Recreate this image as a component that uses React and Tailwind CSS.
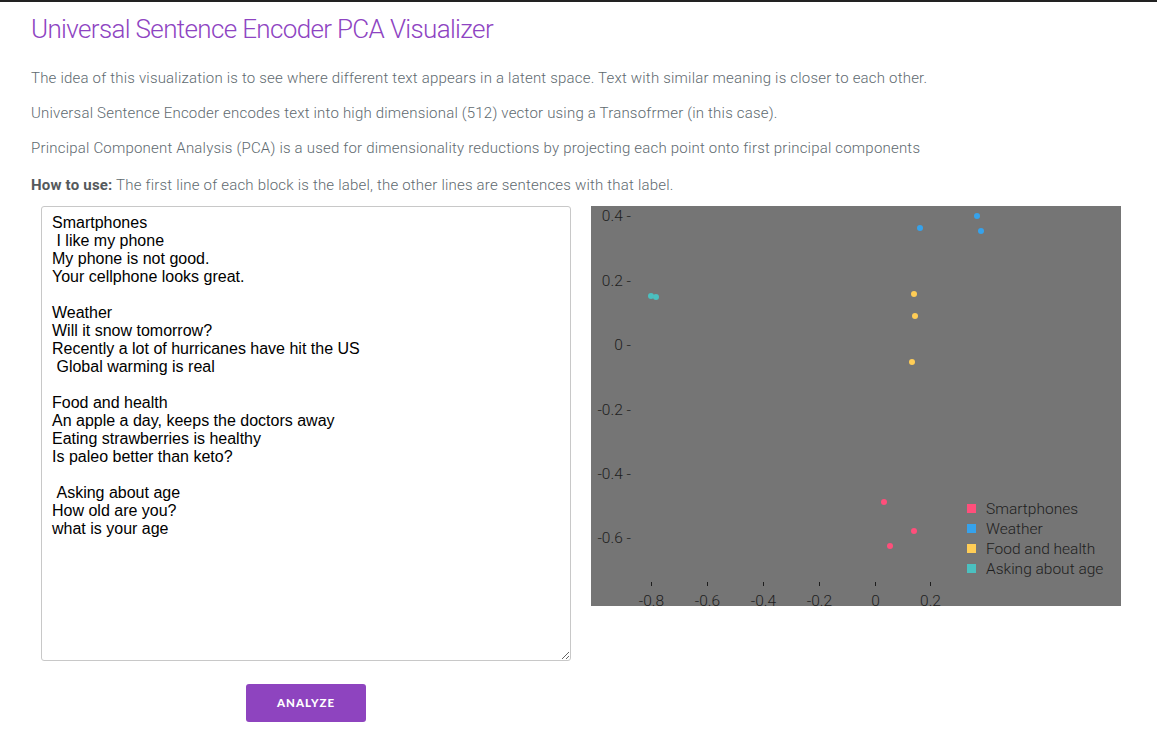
import React, { useState } from 'react';

const SAMPLE = `Smartphones
 I like my phone
My phone is not good.
Your cellphone looks great.

Weather
Will it snow tomorrow?
Recently a lot of hurricanes have hit the US
 Global warming is real

Food and health
An apple a day, keeps the doctors away
Eating strawberries is healthy
Is paleo better than keto?

 Asking about age
How old are you?
what is your age`;

const SERIES = [
  { label: 'Smartphones', color: '#ff4f7b', points: [[293, 296], [323, 325], [299, 340]] },
  { label: 'Weather', color: '#36a2eb', points: [[386, 10], [329, 22], [390, 25]] },
  { label: 'Food and health', color: '#ffcd56', points: [[323, 88], [324, 110], [321, 156]] },
  { label: 'Asking about age', color: '#4bc0c0', points: [[60, 90], [65, 91]] },
];

const Y_TICKS = [
  ['0.4', 10],
  ['0.2', 75],
  ['0', 139],
  ['-0.2', 204],
  ['-0.4', 268],
  ['-0.6', 332],
];

const X_TICKS = [
  ['-0.8', 60],
  ['-0.6', 116],
  ['-0.4', 172],
  ['-0.2', 228],
  ['0', 284],
  ['0.2', 339],
];

// Scatter plot of the projected sentence vectors
function PcaChart() {
  return (
    <div className="w-[530px] h-[400px] bg-[#757575] overflow-hidden">
      <svg width="530" height="400" className="block">
        <g fontFamily="Roboto, 'Liberation Sans', sans-serif" fontWeight="300" fontSize="15.5" fill="#1e1e1e">
          {Y_TICKS.map(([t, y]) => (
            <text key={t} x="40" y={y} textAnchor="end" dominantBaseline="central">
              {t} -
            </text>
          ))}
          {X_TICKS.map(([t, x]) => (
            <g key={t}>
              <rect x={x} y="376" width="1" height="4" fill="#1e1e1e" />
              <text x={x + 0.5} y="395" textAnchor="middle" dominantBaseline="central">
                {t}
              </text>
            </g>
          ))}
          {SERIES.map((s, i) => (
            <g key={s.label}>
              <rect x="376" y={298 + i * 20} width="9" height="9" fill={s.color} />
              <text x="395" y={303 + i * 20} dominantBaseline="central">
                {s.label}
              </text>
            </g>
          ))}
        </g>
        {SERIES.map((s) =>
          s.points.map(([x, y], j) => <circle key={s.label + j} cx={x} cy={y} r="3" fill={s.color} />)
        )}
      </svg>
    </div>
  );
}

export default function App() {
  const [text, setText] = useState(SAMPLE);

  return (
    <div className="min-h-screen bg-white border-t-2 border-[#222] font-['Roboto','Liberation_Sans',sans-serif]">
      <div className="px-[31px] pt-[10px]">
        <h1 className="text-[26px] font-light text-[#8e44c2] tracking-[-0.65px] leading-[34px]">
          Universal Sentence Encoder PCA Visualizer
        </h1>

        <div className="mt-[22px] text-[15px] font-light text-[#606a70] tracking-[0.2px] leading-[20px] flex flex-col gap-[15px]">
          <p>The idea of this visualization is to see where different text appears in a latent space. Text with similar meaning is closer to each other.</p>
          <p>Universal Sentence Encoder encodes text into high dimensional (512) vector using a Transofrmer (in this case).</p>
          <p>Principal Component Analysis (PCA) is a used for dimensionality reductions by projecting each point onto first principal components</p>
          <p className="mt-[2px]">
            <span className="font-bold text-[#55595c]">How to use:</span> The first line of each block is the label, the other lines are sentences with that label.
          </p>
        </div>
      </div>

      <div className="flex gap-[20px] pl-[41px] mt-[11px]">
        <div className="flex flex-col items-center w-[530px]">
          <textarea
            value={text}
            onChange={(e) => setText(e.target.value)}
            className="w-[530px] h-[455px] border border-[#c8c8c8] rounded-[3px] px-[10px] py-[7px] text-[16px] leading-[18px] text-black font-['Liberation_Sans',Arial,sans-serif] resize-y outline-none"
          />
          <button className="mt-[23px] w-[120px] h-[38px] bg-[#8e44bf] rounded-[3px] text-white text-[11.5px] font-black tracking-[1px] font-['Lato','Liberation_Sans',sans-serif]">
            ANALYZE
          </button>
        </div>
        <PcaChart />
      </div>
    </div>
  );
}
